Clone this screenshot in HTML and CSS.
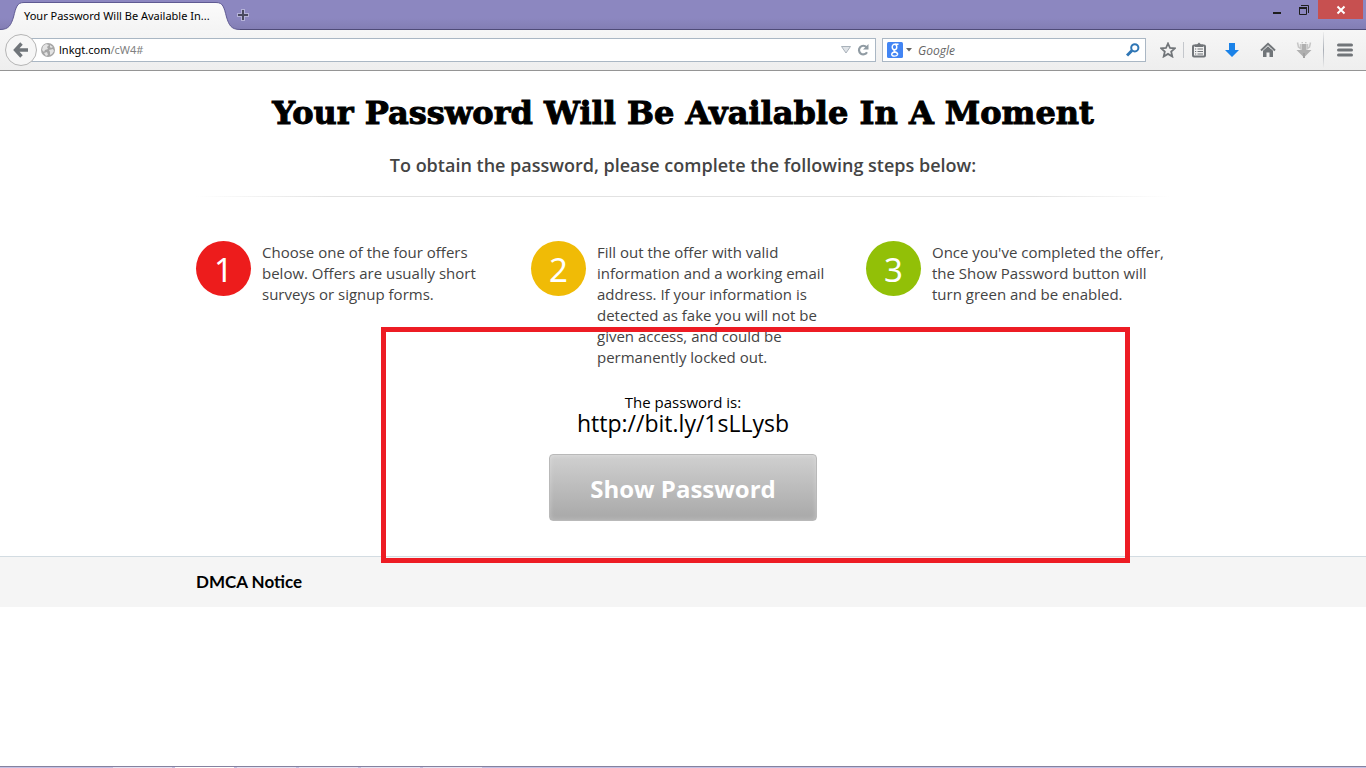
FILE: index.html
```html
<!DOCTYPE html>
<html lang="en">
<head>
    <meta charset="UTF-8">
    <meta name="viewport" content="width=device-width, initial-scale=1.0">
    <title>Your Password Will Be Available In A Moment</title>
    <link rel="stylesheet" href="styles.css">
</head>
<body>
    <header class="browser">
        <div class="titlebar">
            <div class="tab">
                <svg class="tab-shape" viewBox="0 0 240 30" width="240" height="30" aria-hidden="true">
                    <defs>
                        <linearGradient id="tab-fill" x1="0" y1="0" x2="0" y2="1">
                            <stop offset="0" stop-color="#fbfbfb"/>
                            <stop offset="1" stop-color="#f4f4f4"/>
                        </linearGradient>
                    </defs>
                    <path d="M0 30V29.5C9 29.5 11 25 13.500 17C16 7 17 2.500 24 2.500H216C223 2.500 224 7 226.500 17C229 25 231 29.500 240 29.500V30Z" fill="url(#tab-fill)"/>
                    <path d="M0 29.500C9 29.500 11 25 13.500 17C16 7 17 2.500 24 2.500H216C223 2.500 224 7 226.500 17C229 25 231 29.500 240 29.500" fill="none" stroke="#5f5a92" stroke-width="1"/>
                </svg>
                <span class="tab-title">Your Password Will Be Available In...</span>
            </div>
            <button class="new-tab" type="button" aria-label="New tab">
                <svg width="12" height="12" viewBox="0 0 12 12"><path d="M6 0V12M0 6H12" stroke="#b5b2d8" stroke-width="4"/><path d="M6 1V11M1 6H11" stroke="#4a4a60" stroke-width="2"/></svg>
            </button>
            <div class="window-controls">
                <button class="minimize" type="button" aria-label="Minimize">
                    <svg width="10" height="12" viewBox="0 0 10 12"><path d="M1 9H9" stroke="#1e1e1e" stroke-width="2"/></svg>
                </button>
                <button class="restore" type="button" aria-label="Restore">
                    <svg width="12" height="12" viewBox="0 0 12 12" fill="none" stroke="#1e1e1e"><path d="M3 1.500H10.500V9"/><path d="M1.500 4H8.500V10.500H1.500Z"/><path d="M1 4H9" stroke-width="2"/></svg>
                </button>
                <button class="close" type="button" aria-label="Close">
                    <svg width="10" height="10" viewBox="0 0 10 10"><path d="M1.500 1.500L8.500 8.500M8.500 1.500L1.500 8.500" stroke="#fff" stroke-width="2"/></svg>
                </button>
            </div>
        </div>

        <div class="toolbar">
            <button class="back" type="button" aria-label="Back">
                <svg width="16" height="16" viewBox="0 0 16 16" fill="none" stroke="#70757a" stroke-width="3.400"><path d="M2.500 8H15M8.500 1.500L2.500 8L8.500 14.500"/></svg>
            </button>
            <div class="field address">
                <svg width="14" height="14" viewBox="0 0 14 14" aria-hidden="true">
                    <circle cx="7" cy="7" r="7" fill="#a5a5a5"/>
                    <path d="M2 3L5 1L8 2L6 4L7 6L4 7L3 9L1 7ZM9 2L12 4L10 5L9 4ZM8 7L12 6L13 8L11 11L9 12L9 9ZM3 10L6 9L7 12L5 13Z" fill="#e3e3e3"/>
                </svg>
                <a class="url" href="#"><span class="domain">lnkgt.com</span>/cW4#</a>
                <svg width="10" height="8" viewBox="0 0 10 8" aria-hidden="true"><path d="M.5 .5H9.500L5 7Z" fill="#dfe3e7" stroke="#a9b2ba"/></svg>
                <button class="reload" type="button" aria-label="Reload">
                    <svg width="12" height="12" viewBox="0 0 12 12"><path d="M9.500 3.200A4.300 4.300 0 1 0 10 8.200" fill="none" stroke="#909ba3" stroke-width="2.200"/><path d="M11.500 0V5.500H6Z" fill="#909ba3"/></svg>
                </button>
            </div>
            <form class="field search">
                <svg width="16" height="16" viewBox="0 0 16 16" aria-hidden="true">
                    <rect width="16" height="16" rx="1.500" fill="#4285f4"/>
                    <g fill="none" stroke="#fff" stroke-width="1.400"><ellipse cx="7.500" cy="5" rx="2.300" ry="2.700"/><path d="M8 2.200H11.500M8 7.700C6 9 7 9.300 8.500 10C10 10.700 11 11.500 10.500 12.700C9.500 14.700 4.500 14.500 4.700 12.300C4.800 10.500 7 10 8.500 10"/></g>
                </svg>
                <svg class="engine-arrow" width="6" height="4" viewBox="0 0 6 4" aria-hidden="true"><path d="M0 0H6L3 3.500Z" fill="#666"/></svg>
                <input type="text" placeholder="Google" aria-label="Search with Google">
                <button type="button" aria-label="Search">
                    <svg width="14" height="14" viewBox="0 0 14 14" fill="none" stroke="#2f76b5"><circle cx="8.800" cy="4.800" r="3.600" stroke-width="2"/><path d="M6 7.500L1 12.500" stroke-width="3"/></svg>
                </button>
            </form>
            <div class="tools">
                <button class="tool small" type="button" aria-label="Bookmark this page">
                    <svg width="16" height="16" viewBox="0 0 16 16"><path d="M8 1.500L10 6L14.800 6.400L11.200 9.600L12.300 14.500L8 11.900L3.700 14.500L4.800 9.600L1.200 6.400L6 6Z" fill="none" stroke="#717579" stroke-width="1.800"/></svg>
                </button>
                <span class="divider"></span>
                <button class="tool small" type="button" aria-label="Bookmarks">
                    <svg width="14" height="16" viewBox="0 0 14 16"><rect x="1" y="3.500" width="12" height="11" rx="1" fill="none" stroke="#717579" stroke-width="2"/><path d="M3 2.500H5L7 .5L9 2.500H11V5H3Z" fill="#717579"/><path d="M3 7H4.200M5.500 7H11M3 9.500H4.200M5.500 9.500H11M3 12H4.200M5.500 12H11" stroke="#717579" stroke-width="1.200"/></svg>
                </button>
                <button class="tool" type="button" aria-label="Downloads">
                    <svg width="14" height="16" viewBox="0 0 14 16"><path d="M4 1H10V8H14L7 15L0 8H4Z" fill="#1a82e8"/></svg>
                </button>
                <button class="tool" type="button" aria-label="Home">
                    <svg width="16" height="16" viewBox="0 0 16 16"><path d="M1 8.500L8 1.800L15 8.500" fill="none" stroke="#717579" stroke-width="2"/><path d="M3 8.800L8 4.300L13 8.800V15H9.500V10.500H6.500V15H3Z" fill="#717579"/></svg>
                </button>
                <button class="tool" type="button" aria-label="Download helper">
                    <svg width="16" height="16" viewBox="0 0 16 16">
                        <path d="M5.500 2H10.500V8H15.500L8 15.500L.5 8H5.500Z" fill="#b0b0b0"/>
                        <path d="M1.500 .5L2.500 5L4.500 6.500V2M14.500 .5L13.500 5L11.500 6.500V2M5.500 .5H7M9 .5H10.500" fill="none" stroke="#c6c6c6" stroke-width="1.500"/>
                        <path d="M8 11V16" stroke="#a2a2a2" stroke-width="2"/>
                    </svg>
                </button>
                <span class="divider tall"></span>
                <button class="tool menu" type="button" aria-label="Menu">
                    <svg width="16" height="14" viewBox="0 0 16 14"><path d="M1.500 2H14.500M1.500 7H14.500M1.500 12H14.500" stroke="#717579" stroke-width="3" stroke-linecap="round"/></svg>
                </button>
            </div>
        </div>
    </header>

    <main class="page">
        <div class="container">
            <h1>Your Password Will Be Available In A Moment</h1>
            <h2>To obtain the password, please complete the following steps below:</h2>
            <div class="rule"></div>
            <div class="steps">
                <div class="step">
                    <span class="number red">1</span>
                    <p>Choose one of the four offers below. Offers are usually short surveys or signup forms.</p>
                </div>
                <div class="step">
                    <span class="number yellow">2</span>
                    <p>Fill out the offer with valid information and a working email address. If your information is detected as fake you will not be given access, and could be permanently locked out.</p>
                </div>
                <div class="step">
                    <span class="number green">3</span>
                    <p>Once you've completed the offer, the Show Password button will turn green and be enabled.</p>
                </div>
            </div>
            <div class="result">
                <p>The password is:</p>
                <p class="password">http://bit.ly/1sLLysb</p>
                <button class="show-password" type="button">Show Password</button>
            </div>
        </div>
        <footer class="footer">
            <div class="container">
                <a href="#">DMCA Notice</a>
            </div>
        </footer>
        <div class="highlight"></div>
    </main>

    <div class="taskbar" aria-hidden="true">
        <span></span>
        <span class="active"></span>
        <span></span>
        <span></span>
        <span></span>
        <span></span>
    </div>
</body>
</html>
```
FILE: styles.css
```css
* {
    box-sizing: border-box;
}

body {
    display: flex;
    flex-direction: column;
    min-height: 100vh;
    margin: 0;
    background: #fff;
    color: #000;
    font-family: "Open Sans", "Noto Sans", sans-serif;
    font-size: 15px;
    line-height: 21px;
}

h1, h2, p {
    margin: 0;
}

button {
    padding: 0;
    border: none;
    background: none;
    font-family: inherit;
    cursor: pointer;
}

svg {
    display: block;
    flex: none;
}

/* browser window */
.browser {
    font-family: "Noto Sans", "Open Sans", sans-serif;
    font-size: 11px;
    line-height: 16px;
}

.titlebar {
    display: flex;
    height: 30px;
    background: linear-gradient(#8c87c0 60%, #827db3);
    box-shadow: inset 0 -1px #4f4b78;
}

.tab {
    position: relative;
    width: 240px;
    padding: 8px 24px 0;
    white-space: nowrap;
}

.tab-shape {
    position: absolute;
    top: 0;
    left: 0;
}

.tab-title {
    position: relative;
}

.new-tab {
    display: flex;
    align-items: center;
    margin-left: -3px;
}

.window-controls {
    display: flex;
    align-items: flex-start;
    margin-left: auto;
    padding-right: 3px;
}

.window-controls button {
    display: flex;
    align-items: center;
    justify-content: center;
    width: 28px;
    height: 19px;
}

.window-controls .minimize {
    width: 26px;
}

.window-controls .close {
    width: 45px;
    background: #c75050;
}

.toolbar {
    display: flex;
    align-items: center;
    height: 41px;
    padding-left: 5px;
    border-bottom: 1px solid #959595;
    background: linear-gradient(#f6f6f6, #eee);
}

.back {
    z-index: 1;
    display: flex;
    align-items: center;
    justify-content: center;
    width: 32px;
    height: 32px;
    margin-right: -6px;
    border: 1px solid #b5b5b5;
    border-radius: 50%;
    background: #f6f6f6;
}

.field {
    display: flex;
    align-items: center;
    height: 24px;
    border: 1px solid #aab7c4;
    background: #fff;
}

.address {
    flex: 1;
    gap: 4px;
    padding: 0 6px 0 9px;
}

.url {
    flex: 1;
    color: #808080;
    text-decoration: none;
}

.domain {
    color: #000;
}

.reload {
    margin-left: 2px;
}

.search {
    width: 264px;
    margin-left: 6px;
    padding: 0 5px 0 4px;
}

.engine-arrow {
    margin: 0 6px 0 3px;
}

.search input {
    flex: 1;
    min-width: 0;
    padding: 0;
    border: none;
    outline: none;
    background: none;
    font-family: "Open Sans", sans-serif;
    font-size: 12px;
}

.search input::placeholder {
    color: #666;
    font-style: italic;
}

.tools {
    display: flex;
    align-items: center;
    margin-left: 7px;
}

.tool {
    display: flex;
    align-items: center;
    justify-content: center;
    width: 36px;
    height: 32px;
}

.tool.small {
    width: 30px;
}

.tool.menu {
    width: 42px;
}

.divider {
    width: 1px;
    height: 16px;
    background: #c4c7cc;
}

.divider.tall {
    height: 36px;
    margin-left: 1px;
    background: linear-gradient(#eee, #a9aeb6, #eee);
}

/* page */
.page {
    position: relative;
}

.container {
    width: 100%;
    max-width: 974px;
    margin: 0 auto;
}

h1 {
    padding-top: 22px;
    font-family: Rockwell, "DejaVu Serif", serif;
    font-size: 32px;
    font-weight: bold;
    line-height: 40px;
    text-align: center;
    -webkit-text-stroke: 1px #000;
}

h2 {
    padding: 20px 0 18px;
    color: #444;
    font-size: 18px;
    font-weight: 600;
    line-height: 25px;
    text-align: center;
}

.rule {
    height: 1px;
    background: linear-gradient(to right, #fff, #e2e2e2 14%, #e2e2e2 86%, #fff);
}

.steps {
    display: grid;
    grid-template-columns: repeat(3, 1fr);
    gap: 31px;
    padding-top: 44px;
    color: #444;
}

.step {
    display: flex;
    align-items: flex-start;
    gap: 11px;
}

.step p {
    padding-top: 1px;
}

.number {
    flex: none;
    width: 55px;
    height: 55px;
    border-radius: 50%;
    color: #fff;
    font-family: "Noto Sans", sans-serif;
    font-size: 33px;
    line-height: 57px;
    text-align: center;
}

.red {
    background: #ed1c1c;
}

.yellow {
    background: #f0bb06;
}

.green {
    background: #92c007;
}

.result {
    padding: 24px 0 35px;
    text-align: center;
}

.password {
    font-size: 23px;
}

.show-password {
    width: 268px;
    height: 67px;
    margin-top: 20px;
    padding-top: 2px;
    border: 1px solid #b9b9b9;
    border-radius: 4px;
    background: linear-gradient(#d0d0d0, #a8a8a8);
    box-shadow: inset 0 0 5px rgba(255, 255, 255, 0.3);
    color: #fff;
    font-size: 24px;
    font-weight: bold;
}

.footer {
    padding: 14px 0;
    border-top: 1px solid #d3dce2;
    background: #f5f5f5;
}

.footer a {
    color: #000;
    font-family: Lato, sans-serif;
    font-size: 17px;
    font-weight: bold;
    text-decoration: none;
}

.highlight {
    position: absolute;
    top: 256px;
    left: calc(50% - 302px);
    width: 749px;
    height: 236px;
    border: 5px solid #ed1c24;
    pointer-events: none;
}

/* top edge of the taskbar */
.taskbar {
    display: flex;
    gap: 3px;
    height: 2px;
    margin-top: auto;
    padding-left: 113px;
    border-top: 1px solid #85829f;
    background: #c3c0e4;
}

.taskbar span {
    width: 59px;
    background: #e4e3f4;
}

.taskbar .active {
    background: #fff;
}
```
